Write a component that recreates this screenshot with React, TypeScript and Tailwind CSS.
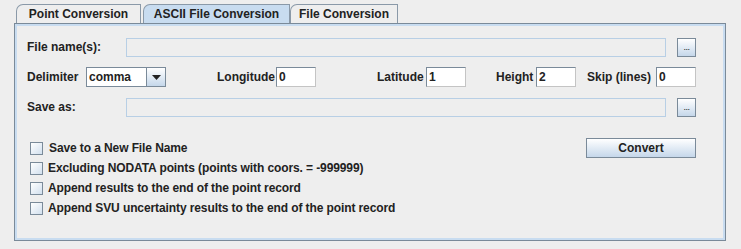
import React from "react";

const font = { fontFamily: '"Liberation Sans", Arial, sans-serif' };

const Tab = ({ label, active, w }: { label: string; active?: boolean; w: string }) => (
    <div
        className={`flex h-[19px] items-center justify-center rounded-tl-[7px] border border-b-0 border-[#8a99a8] text-[12px] font-bold text-[#222] ${w} ${
            active ? "bg-[#c8dcf0]" : "bg-[#eeeeee]"
        }`}
    >
        {label}
    </div>
);

const Browse = () => (
    <button className="flex h-[19px] w-[19px] items-end justify-center border border-[#7a8a99] bg-gradient-to-b from-[#ffffff] to-[#c5d7ea] pb-[4px]">
        <span className="text-[9px] leading-none tracking-[-0.5px] text-[#222]">...</span>
    </button>
);

const NumField = ({ value }: { value: string }) => (
    <div className="flex h-[20px] w-[40px] items-center border border-[#7a8a99] border-b-[#c4c4c4] border-r-[#c4c4c4] bg-white pl-[2px] text-[12px] text-[#222]">
        {value}
    </div>
);

const Check = ({ label, pl = "pl-[5px]" }: { label: string; pl?: string }) => (
    <div className="flex h-[20px] items-center">
        <div className="h-[13px] w-[13px] border border-[#7a8a99] bg-gradient-to-br from-[#ffffff] to-[#d2e0ee]" />
        <span className={`${pl} text-[12px] font-bold tracking-[-0.1px] text-[#222]`}>{label}</span>
    </div>
);

export default function App() {
    return (
        <div className="h-[249px] w-[741px] bg-[#eeeeee] pt-[4px]" style={font}>
            <div className="flex pl-[16px]">
                <Tab label="Point Conversion" w="w-[125px]" />
                <div className="ml-[2px]">
                    <Tab label="ASCII File Conversion" w="w-[147px]" active />
                </div>
                <Tab label="File Conversion" w="w-[108px]" />
            </div>
            <div className="ml-[14px] h-[218px] w-[712px] border border-[#7a8a99] shadow-[inset_0_0_0_2px_#c8dcf0]">
                <div className="flex flex-col gap-[10px] pl-[12px] pt-[13px]">
                    <div className="flex h-[20px] items-center">
                        <span className="w-[99px] text-[12px] font-bold text-[#222]">File name(s):</span>
                        <div className="h-[19px] w-[540px] border border-[#b8cfe5] bg-[#eeeeee]" />
                        <div className="ml-[11px]">
                            <Browse />
                        </div>
                    </div>
                    <div className="flex h-[20px] items-center text-[12px] font-bold text-[#222]">
                        <span className="w-[59px]">Delimiter</span>
                        <div className="flex h-[20px] w-[80px] border border-[#7a8a99] bg-white">
                            <span className="flex-1 pl-[2px] leading-[18px]">comma</span>
                            <div className="flex w-[19px] items-center justify-center border-l border-[#7a8a99] bg-gradient-to-b from-[#ffffff] to-[#c5d7ea]">
                                <svg width="9" height="5" viewBox="0 0 9 5">
                                    <path d="M0 0h9L4.5 5z" fill="#222" />
                                </svg>
                            </div>
                        </div>
                        <span className="ml-[51px] w-[59px]">Longitude</span>
                        <NumField value="0" />
                        <span className="ml-[61px] w-[49px]">Latitude</span>
                        <NumField value="1" />
                        <span className="ml-[30px] w-[40px]">Height</span>
                        <NumField value="2" />
                        <span className="ml-[11px] w-[69px]">Skip (lines)</span>
                        <NumField value="0" />
                    </div>
                    <div className="flex h-[20px] items-center">
                        <span className="w-[99px] text-[12px] font-bold text-[#222]">Save as:</span>
                        <div className="h-[19px] w-[540px] border border-[#b8cfe5] bg-[#eeeeee]" />
                        <div className="ml-[11px]">
                            <Browse />
                        </div>
                    </div>
                </div>
                <div className="mt-[21px] flex flex-col pl-[15px]">
                    <div className="flex items-center justify-between pr-[29px]">
                        <Check label="Save to a New File Name" pl="pl-[6px]" />
                        <button className="h-[20px] w-[110px] border border-[#7a8a99] bg-gradient-to-b from-[#ffffff] to-[#c5d7ea] text-[12px] font-bold text-[#222]">
                            Convert
                        </button>
                    </div>
                    <Check label="Excluding NODATA points (points with coors. = -999999)" />
                    <Check label="Append results to the end of the point record" />
                    <Check label="Append SVU uncertainty results to the end of the point record" />
                </div>
            </div>
        </div>
    );
}
